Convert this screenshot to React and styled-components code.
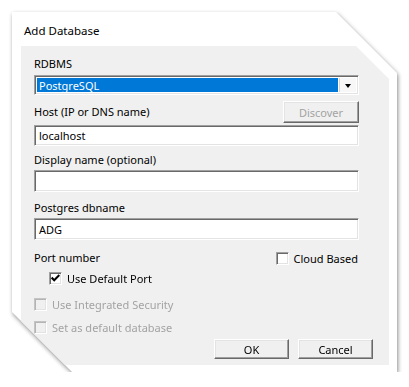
import React from 'react';
import styled, { createGlobalStyle } from 'styled-components';

const Global = createGlobalStyle`
  html, body { margin: 0; padding: 0; background: #fff; }
  body { font-family: "Noto Sans", "Open Sans", sans-serif; }
`;

const Stage = styled.div`
  padding: 12px 0 0 12px;
  filter: drop-shadow(1px 2px 2px rgba(0, 0, 0, 0.45));
`;

const Dialog = styled.div`
  width: 385px;
  height: 360px;
  background: #fff;
  clip-path: polygon(0 0, 324px 0, 385px 61px, 385px 360px, 60px 360px, 0 300px);
  display: flex;
  flex-direction: column;
`;

const TitleBar = styled.div`
  height: 34px;
  box-sizing: border-box;
  padding: 3px 0 0 12px;
  display: flex;
  align-items: center;
  font-size: 11.5px;
  color: #000;
`;

const Panel = styled.div`
  flex: 1;
  margin: 0 8px 7px 9px;
  background: #f0f0f0;
  clip-path: polygon(0 0, 335px 0, 368px 33px, 368px 100%, 0 100%);
  padding: 0 30px 0 13px;
  display: flex;
  flex-direction: column;
`;

const Label = styled.div`
  margin-top: ${(p) => p.$mt || 0}px;
  height: 14px;
  line-height: 14px;
  font-size: 11px;
  color: ${(p) => (p.$disabled ? '#a3a3a3' : '#000')};
  white-space: nowrap;
`;

const sunken = `
  box-sizing: border-box;
  border: 1px solid;
  border-color: #a0a0a0 #fff #fff #a0a0a0;
  box-shadow: inset 1px 1px 0 #696969, inset -1px -1px 0 #e3e3e3;
`;

const raised = `
  box-sizing: border-box;
  border: 1px solid;
  border-color: #fff #696969 #696969 #fff;
  box-shadow: inset -1px -1px 0 #a0a0a0, inset 1px 1px 0 #e3e3e3;
  background: #f0f0f0;
`;

const Combo = styled.div`
  ${sunken}
  margin-top: ${(p) => p.$mt || 0}px;
  height: 20px;
  background: #fff;
  display: flex;
  padding: 2px;
`;

const Selected = styled.div`
  flex: 1;
  background: #0078d7;
  color: #fff;
  font-size: 11px;
  line-height: 16px;
  padding-left: 2px;
`;

const Arrow = styled.div`
  width: 16px;
  background: #f7f7f7;
  border-left: 1px solid #d4d4d4;
  display: flex;
  align-items: center;
  justify-content: center;
  margin-left: 1px;
  &::after {
    content: '';
    border-left: 3.5px solid transparent;
    border-right: 3.5px solid transparent;
    border-top: 4px solid #000;
    margin-top: 1px;
  }
`;

const Row = styled.div`
  margin-top: ${(p) => p.$mt || 0}px;
  height: ${(p) => p.$h || 14}px;
  display: flex;
  align-items: center;
  justify-content: space-between;
`;

const Button = styled.button`
  ${raised}
  width: ${(p) => p.$w || 75}px;
  height: ${(p) => p.$h || 20}px;
  padding: 0;
  font-family: "Noto Sans", sans-serif;
  font-size: 11px;
  color: ${(p) => (p.disabled ? '#a3a3a3' : '#000')};
`;

const Field = styled.div`
  ${sunken}
  margin-top: ${(p) => p.$mt || 0}px;
  height: ${(p) => p.$h || 22}px;
  background: #fff;
  font-size: 11px;
  display: flex;
  align-items: center;
  padding-left: 4px;
  color: #000;
`;

const CheckItem = styled.label`
  margin-top: ${(p) => p.$mt || 0}px;
  margin-left: ${(p) => p.$ml || 0}px;
  margin-right: ${(p) => p.$mr || 0}px;
  height: 13px;
  display: flex;
  align-items: center;
  gap: 5px;
  font-size: 11px;
  color: ${(p) => (p.$disabled ? '#a3a3a3' : '#000')};
  white-space: nowrap;
`;

const Box = styled.span`
  ${sunken}
  width: 13px;
  height: 13px;
  flex: none;
  background: ${(p) => (p.$disabled ? '#f0f0f0' : '#fff')};
  border-color: ${(p) => (p.$disabled ? '#c4c4c4 #fff #fff #c4c4c4' : '#a0a0a0 #fff #fff #a0a0a0')};
  box-shadow: ${(p) =>
    p.$disabled
      ? 'inset 1px 1px 0 #b4b4b4, inset -1px -1px 0 #e3e3e3'
      : 'inset 1px 1px 0 #696969, inset -1px -1px 0 #e3e3e3'};
  display: flex;
  align-items: center;
  justify-content: center;
`;

const ButtonRow = styled.div`
  margin-top: 5px;
  margin-right: -14px;
  display: flex;
  justify-content: flex-end;
  gap: 9px;
`;

const Check = ({ checked, disabled, children, ...rest }) => (
  <CheckItem $disabled={disabled} {...rest}>
    <Box $disabled={disabled}>
      {checked && (
        <svg width="9" height="9" viewBox="0 0 7 7">
          <path d="M0.5 2.8 L2.5 4.8 L6.5 0.8" stroke="#000" strokeWidth="1.6" fill="none" />
        </svg>
      )}
    </Box>
    {children}
  </CheckItem>
);

export default function App() {
  return (
    <>
      <Global />
      <Stage>
        <Dialog>
          <TitleBar>Add Database</TitleBar>
          <Panel>
            <Label $mt={11}>RDBMS</Label>
            <Combo $mt={4}>
              <Selected>PostgreSQL</Selected>
              <Arrow />
            </Combo>
            <Row $mt={6} $h={22}>
              <Label>Host (IP or DNS name)</Label>
              <Button disabled $w={76} $h={22}>Discover</Button>
            </Row>
            <Field $mt={2} $h={21}>localhost</Field>
            <Label $mt={7}>Display name (optional)</Label>
            <Field $mt={3} />
            <Label $mt={9}>Postgres dbname</Label>
            <Field $mt={3}>ADG</Field>
            <Row $mt={11}>
              <Label>Port number</Label>
              <Check $mr={1}>Cloud Based</Check>
            </Row>
            <Check $mt={7} $ml={15} checked>Use Default Port</Check>
            <Check $mt={13} disabled>Use Integrated Security</Check>
            <Check $mt={10} disabled>Set as default database</Check>
            <ButtonRow>
              <Button>OK</Button>
              <Button>Cancel</Button>
            </ButtonRow>
          </Panel>
        </Dialog>
      </Stage>
    </>
  );
}
